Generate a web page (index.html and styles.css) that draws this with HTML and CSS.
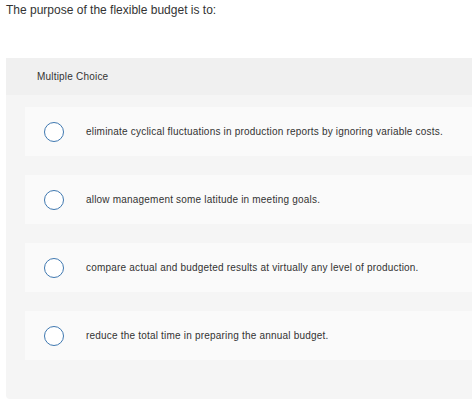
FILE: index.html
```html
<!DOCTYPE html>
<html>
<head>
<meta charset="utf-8">
<link rel="stylesheet" href="styles.css">
</head>
<body>
<div class="question">The purpose of the flexible budget is to:</div>
<div class="panel">
  <div class="panel-header">Multiple Choice</div>
  <div class="options">
    <div class="option"><span class="radio"></span><span class="label">eliminate cyclical fluctuations in production reports by ignoring variable costs.</span></div>
    <div class="option"><span class="radio"></span><span class="label">allow management some latitude in meeting goals.</span></div>
    <div class="option"><span class="radio"></span><span class="label">compare actual and budgeted results at virtually any level of production.</span></div>
    <div class="option"><span class="radio"></span><span class="label">reduce the total time in preparing the annual budget.</span></div>
  </div>
</div>
</body>
</html>
```
FILE: styles.css
```css
html, body {
  margin: 0;
  padding: 0;
  background: #ffffff;
}
body {
  font-family: "Liberation Sans", Arial, sans-serif;
  color: #333333;
}
.question {
  height: 58px;
  box-sizing: border-box;
  padding: 3px 0 0 6px;
  font-size: 12px;
  line-height: 15px;
  color: #333333;
}
.panel {
  margin-left: 6px;
  background: #f5f5f5;
  border-bottom-left-radius: 4px;
  padding-bottom: 39px;
}
.panel-header {
  height: 37px;
  background: #f0f0f0;
  padding-left: 31px;
  font-size: 10px;
  letter-spacing: 0.2px;
  line-height: 37px;
  color: #333333;
}
.options {
  display: flex;
  flex-direction: column;
  gap: 19px;
  padding: 12px 0 0 19px;
}
.option {
  height: 49px;
  background: #fafafa;
  display: flex;
  align-items: center;
  padding-left: 19px;
}
.radio {
  width: 18px;
  height: 18px;
  border: 1.3px solid #3f78b0;
  border-radius: 50%;
  background: #ffffff;
  flex: none;
}
.label {
  margin-left: 22px;
  font-size: 10px;
  letter-spacing: 0.2px;
  color: #333333;
}
```
